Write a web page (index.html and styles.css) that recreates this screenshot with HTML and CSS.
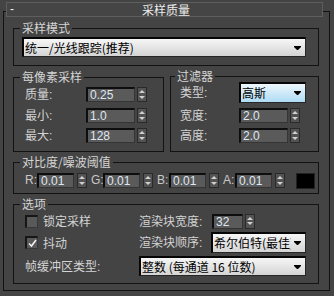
FILE: index.html
```html
<!DOCTYPE html>
<html lang="zh">
<head>
    <meta charset="UTF-8">
    <meta name="viewport" content="width=device-width, initial-scale=1.0">
    <title>采样质量</title>
    <link rel="stylesheet" href="styles.css">
</head>
<body>

    <div class="rollout">
        <div class="rollout-head">
            <span class="toggle">-</span>
            <span class="head-title">采样质量</span>
        </div>

        <div class="rollout-body">
            <fieldset class="group mode">
                <legend>采样模式</legend>
                <div class="dropdown mode-select">
                    <span class="dd-text">统一/光线跟踪(推荐)</span>
                    <svg class="arrow" width="7" height="4"><path d="M0 0h7v1l-3 3h-1l-3-3z"/></svg>
                </div>
            </fieldset>

            <div class="pair">
                <fieldset class="group pixel">
                    <legend>每像素采样</legend>
                    <div class="field-row">
                        <label>质量<span class="colon">:</span></label>
                        <div class="num">0.25</div>
                        <div class="spin"></div>
                    </div>
                    <div class="field-row">
                        <label>最小<span class="colon">:</span></label>
                        <div class="num">1.0</div>
                        <div class="spin"></div>
                    </div>
                    <div class="field-row">
                        <label>最大<span class="colon">:</span></label>
                        <div class="num">128</div>
                        <div class="spin"></div>
                    </div>
                </fieldset>

                <fieldset class="group filter">
                    <legend>过滤器</legend>
                    <div class="field-row type-row">
                        <label>类型<span class="colon">:</span></label>
                        <div class="dropdown blue">
                            <span class="dd-text">高斯</span>
                            <svg class="arrow" width="7" height="4"><path d="M0 0h7v1l-3 3h-1l-3-3z"/></svg>
                        </div>
                    </div>
                    <div class="field-row">
                        <label>宽度<span class="colon">:</span></label>
                        <div class="num">2.0</div>
                        <div class="spin"></div>
                    </div>
                    <div class="field-row">
                        <label>高度<span class="colon">:</span></label>
                        <div class="num">2.0</div>
                        <div class="spin"></div>
                    </div>
                </fieldset>
            </div>

            <fieldset class="group contrast">
                <legend>对比度/噪波阈值</legend>
                <div class="rgba">
                    <div class="chan"><label>R:</label><div class="num">0.01</div><div class="spin"></div></div>
                    <div class="chan"><label>G:</label><div class="num">0.01</div><div class="spin"></div></div>
                    <div class="chan"><label>B:</label><div class="num">0.01</div><div class="spin"></div></div>
                    <div class="chan"><label>A:</label><div class="num">0.01</div><div class="spin"></div></div>
                    <div class="swatch"></div>
                </div>
            </fieldset>

            <fieldset class="group options">
                <legend>选项</legend>
                <div class="opt-grid">
                    <div class="check-item">
                        <span class="checkbox"></span>
                        <span>锁定采样</span>
                    </div>
                    <label>渲染块宽度<span class="colon">:</span></label>
                    <div class="bucket">
                        <div class="num">32</div>
                        <div class="spin"></div>
                    </div>

                    <div class="check-item">
                        <span class="checkbox">
                            <svg width="9" height="9"><path d="M1 4.5l2.5 2.5 4.5-6" fill="none" stroke="#f2f2f2" stroke-width="1.6"/></svg>
                        </span>
                        <span>抖动</span>
                    </div>
                    <label>渲染块顺序<span class="colon">:</span></label>
                    <div class="dropdown order">
                        <span class="dd-text">希尔伯特(最佳)</span>
                        <svg class="arrow" width="7" height="4"><path d="M0 0h7v1l-3 3h-1l-3-3z"/></svg>
                    </div>

                    <label>帧缓冲区类型<span class="colon">:</span></label>
                    <div class="dropdown buffer">
                        <span class="dd-text">整数 (每通道 16 位数)</span>
                        <svg class="arrow" width="7" height="4"><path d="M0 0h7v1l-3 3h-1l-3-3z"/></svg>
                    </div>
                </div>
            </fieldset>
        </div>
    </div>

</body>
</html>
```

FILE: styles.css
```css
*{
    box-sizing: border-box;
}

body {
    margin: 0;
    width: 334px;
    height: 296px;
    overflow: hidden;
    background-color: #444444;
    font-family: "Noto Sans CJK SC", sans-serif;
    font-size: 12px;
    color: #d4d4d4;
}

.rollout{
    padding-top: 2px;
}

.rollout-head{
    position: relative;
    z-index: 1;
    display: flex;
    align-items: center;
    height: 15px;
    margin: 0 11px 0 6px;
    border: 1px solid #5e5e5e;
    background-color: #454545;
    line-height: 13px;
}
.toggle{
    width: 0;
    margin-left: 3px;
    font-family: "Liberation Sans", sans-serif;
    color: #eeeeee;
}
.head-title{
    flex: 1;
    text-align: center;
    color: #ececec;
}

.rollout-body{
    display: flex;
    flex-direction: column;
    margin: -6px 4px 0 3px;
    padding: 9px 10px 6px 9px;
    border: 1px solid #111111;
}

/* group boxes */
.group{
    margin: 0;
    min-width: 0;
    padding: 0 10px 8px 6px;
    border: 1px solid #121212;
}
.group legend{
    height: 14px;
    padding: 0 2px;
    line-height: 14px;
    color: #d4d4d4;
}

.mode{
    padding-top: 2px;
}
.mode-select{
    width: 284px;
    height: 20px;
    margin-left: 2px;
}

.pair{
    display: flex;
    gap: 6px;
    margin-top: 4px;
}
.pixel{
    width: 151px;
    padding-top: 3px;
}
.filter{
    width: 149px;
    padding-left: 4px;
}
.filter legend{
    height: 12px;
    line-height: 12px;
    margin-top: 1px;
}

.field-row{
    display: flex;
    align-items: center;
    height: 15px;
    margin-left: 5px;
}
.field-row label{
    width: 61px;
    line-height: 15px;
}
.pixel .field-row + .field-row{
    margin-top: 6px;
}
.pixel .field-row:last-child{
    margin-top: 5px;
}
.filter .field-row label{
    width: 59px;
}
.filter .field-row + .field-row{
    margin-top: 5px;
}
.filter .type-row{
    height: 21px;
}
.filter .dropdown{
    width: 67px;
    height: 21px;
}

.colon{
    font-family: "Liberation Sans", sans-serif;
}

/* spinner fields */
.num{
    width: 49px;
    height: 15px;
    margin-right: 2px;
    padding-left: 2px;
    border-top: 2px solid #0e0e0e;
    border-left: 2px solid #0e0e0e;
    border-right: 1px solid #353535;
    border-bottom: 1px solid #353535;
    background-color: #5a5a5a;
    font-family: "Liberation Sans", sans-serif;
    font-size: 12px;
    line-height: 12px;
    color: #dfe7f3;
}
.spin{
    display: flex;
    flex-direction: column;
    align-items: center;
    justify-content: space-evenly;
    width: 10px;
    height: 15px;
    border: 1px solid #2a2a2a;
    background-color: #535353;
}
.spin::before{
    content: "";
    border-left: 3px solid transparent;
    border-right: 3px solid transparent;
    border-bottom: 3px solid #d0d0d0;
}
.spin::after{
    content: "";
    border-left: 3px solid transparent;
    border-right: 3px solid transparent;
    border-top: 3px solid #d0d0d0;
}

/* drop downs */
.dropdown{
    display: flex;
    align-items: center;
    padding: 0 4px 0 1px;
    border-top: 2px solid #050505;
    border-left: 2px solid #050505;
    border-right: 1px solid #262626;
    border-bottom: 1px solid #262626;
    background: linear-gradient(#f6f6f6, #d4d4d4);
    color: #000000;
    line-height: 16px;
}
.dropdown.blue{
    background: linear-gradient(#eef7fd, #aedbf4);
}
.dd-text{
    flex: 1;
    overflow: hidden;
    white-space: nowrap;
}
.arrow{
    flex: none;
    margin-left: 3px;
    fill: #000000;
}

/* contrast */
.contrast{
    margin-top: 3px;
    padding: 4px 0 4px 6px;
}
.rgba{
    display: flex;
    align-items: flex-start;
    margin-left: 5px;
}
.chan{
    display: flex;
    margin-right: 4px;
}
.chan label{
    width: 12px;
    font-family: "Liberation Sans", sans-serif;
    line-height: 15px;
    color: #c8c8c8;
}
.chan .num{
    width: 37px;
    margin-right: 3px;
}
.swatch{
    width: 19px;
    height: 16px;
    margin-left: 7px;
    border: 1px solid #222222;
    background-color: #000000;
}

/* options */
.options{
    margin-top: 3px;
    padding: 2px 0 7px 6px;
}
.opt-grid{
    display: grid;
    grid-template-columns: 114px 72px 95px;
    grid-template-rows: 16px 21px 20px;
    row-gap: 3px;
    align-items: center;
    margin-left: 5px;
}
.opt-grid label{
    line-height: 16px;
}
.check-item{
    display: flex;
    align-items: center;
    gap: 5px;
    line-height: 16px;
}
.checkbox{
    display: flex;
    align-items: center;
    justify-content: center;
    width: 13px;
    height: 13px;
    border-top: 2px solid #161616;
    border-left: 2px solid #161616;
    border-right: 1px solid #383838;
    border-bottom: 1px solid #383838;
    background-color: #595959;
}
.bucket{
    display: flex;
    margin-left: 1px;
}
.bucket .num{
    width: 31px;
}
.order{
    height: 21px;
}
.buffer{
    grid-column: 2 / 4;
    height: 20px;
}
```
